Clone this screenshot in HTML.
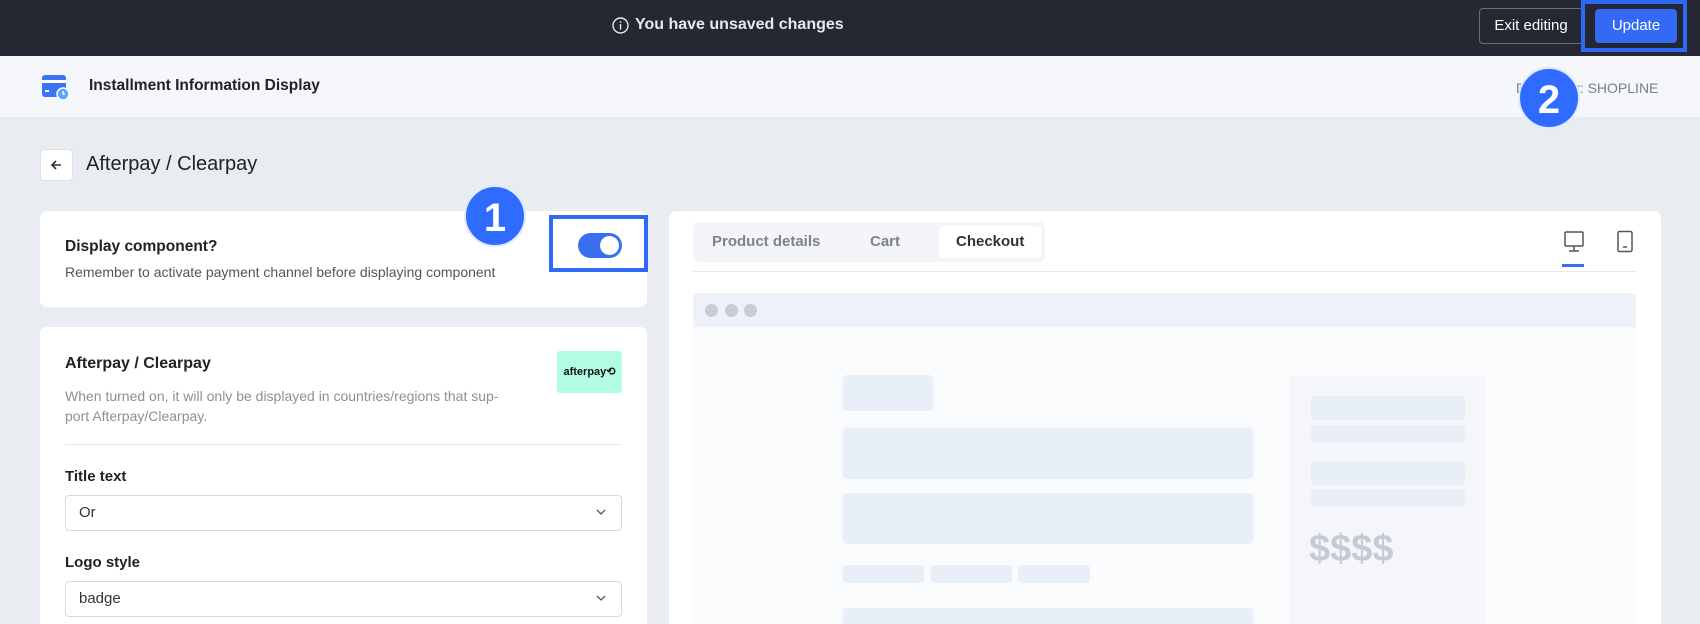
<!DOCTYPE html>
<html style="width:1700px;height:624px;overflow:hidden"><head><meta charset="utf-8"><style>
*{box-sizing:border-box;margin:0;padding:0}
body{width:1700px;height:624px;overflow:hidden;background:#e9ecf1;font-family:"Liberation Sans",sans-serif;position:relative;color:#1f2329}
.a{position:absolute}
.top{left:0;top:0;width:1700px;height:56px;background:#252733}
.hdr{left:0;top:56px;width:1700px;height:61px;background:#f5f7fa}
.card{background:#fff;border-radius:7px}
.sk{background:#e9eff6;border-radius:4px}
.hl{border:4px solid #2f68f5}
.circ{background:#2f6bff;border-radius:50%;color:#fff;font-weight:bold;font-size:40px;text-align:center;line-height:62px;width:62px;height:62px;border:2px solid #dfe8ff}
.sel{border:1px solid #d6d9df;border-radius:4px;background:#fff;font-size:15px;color:#333;padding-left:13px}
.lbl{font-size:15px;font-weight:bold;color:#222}
</style></head><body>
<div class="a top"></div>
<div class="a" style="left:612px;top:16px;color:#e8e9ec;font-size:16px;font-weight:bold;display:flex;align-items:center;gap:6px">
<svg width="17" height="17" viewBox="0 0 17 17"><circle cx="8.5" cy="8.5" r="7.5" fill="none" stroke="#e8e9ec" stroke-width="1.4"/><rect x="7.8" y="7" width="1.4" height="5.5" fill="#e8e9ec"/><rect x="7.8" y="4.3" width="1.4" height="1.5" fill="#e8e9ec"/></svg>You have unsaved changes</div>
<div class="a" style="left:1479px;top:8px;width:104px;height:36px;border:1px solid #6b6e78;border-radius:4px;color:#fff;font-size:15px;text-align:center;line-height:34px">Exit editing</div>
<div class="a hl" style="left:1581px;top:0;width:106px;height:52px"></div>
<div class="a" style="left:1595px;top:9px;width:82px;height:34px;background:#3369f5;border-radius:4px;color:#fff;font-size:15px;text-align:center;line-height:34px">Update</div>

<div class="a hdr"></div>
<svg class="a" style="left:41px;top:74px" width="29" height="27" viewBox="0 0 29 27"><rect x="1" y="1" width="24" height="22" rx="3" fill="#3a74f2"/><rect x="1" y="6" width="24" height="3" fill="#fff"/><rect x="4" y="16" width="4" height="2" fill="#fff"/><circle cx="22" cy="20" r="6" fill="#5aa8f5" stroke="#fff" stroke-width="1.5"/><path d="M22 17v3h2" stroke="#fff" stroke-width="1.3" fill="none"/></svg>
<div class="a" style="left:89px;top:77px;font-size:15.5px;font-weight:bold;color:#222">Installment Information Display</div>
<div class="a" style="left:1516px;top:80px;font-size:14px;color:#7a7f89">Developer: SHOPLINE</div>
<div class="a circ" style="left:1518px;top:67px">2</div>

<div class="a" style="left:40px;top:149px;width:33px;height:32px;background:#fff;border:1px solid #dde0e5;border-radius:4px"><svg width="31" height="30" viewBox="0 0 31 30"><path d="M20 15H11M15 11l-4 4 4 4" stroke="#333" stroke-width="1.6" fill="none"/></svg></div>
<div class="a" style="left:86px;top:153px;font-size:20px;color:#222">Afterpay / Clearpay</div>

<div class="a card" style="left:40px;top:211px;width:607px;height:96px"></div>
<div class="a lbl" style="left:65px;top:238px;font-size:15.5px">Display component?</div>
<div class="a" style="left:65px;top:264px;font-size:14px;color:#555">Remember to activate payment channel before displaying component</div>
<div class="a hl" style="left:549px;top:215px;width:99px;height:57px"></div>
<div class="a" style="left:578px;top:233px;width:44px;height:25px;background:#3a6ff0;border-radius:13px"><div class="a" style="left:22px;top:3px;width:19px;height:19px;background:#fff;border-radius:50%"></div></div>
<div class="a circ" style="left:464px;top:185px">1</div>

<div class="a card" style="left:40px;top:327px;width:607px;height:297px;border-radius:7px 7px 0 0"></div>
<div class="a lbl" style="left:65px;top:355px;font-size:16px">Afterpay / Clearpay</div>
<div class="a" style="left:65px;top:386px;font-size:14px;color:#8a8f99;line-height:20px;width:470px">When turned on, it will only be displayed in countries/regions that sup-<br>port Afterpay/Clearpay.</div>
<div class="a" style="left:557px;top:351px;width:65px;height:42px;background:#b2fce4;border-radius:3px;font-size:11px;font-weight:bold;text-align:center;line-height:42px;color:#111">afterpay⟲</div>
<div class="a" style="left:65px;top:444px;width:557px;height:1px;background:#e6e8ec"></div>
<div class="a lbl" style="left:65px;top:468px">Title text</div>
<div class="a sel" style="left:65px;top:495px;width:557px;height:36px;line-height:34px">Or</div>
<div class="a lbl" style="left:65px;top:554px">Logo style</div>
<div class="a sel" style="left:65px;top:581px;width:557px;height:36px;line-height:34px">badge</div>
<svg class="a" style="left:596px;top:508px" width="10" height="8"><path d="M1 2l4 4 4-4" stroke="#555" stroke-width="1.3" fill="none"/></svg>
<svg class="a" style="left:596px;top:594px" width="10" height="8"><path d="M1 2l4 4 4-4" stroke="#555" stroke-width="1.3" fill="none"/></svg>

<div class="a card" style="left:669px;top:211px;width:992px;height:413px;border-radius:7px 7px 0 0"></div>
<div class="a" style="left:693px;top:222px;width:352px;height:40px;background:#f3f5f8;border-radius:5px"></div>
<div class="a" style="left:939px;top:226px;width:103px;height:32px;background:#fff;border-radius:4px"></div>
<div class="a" style="left:712px;top:233px;font-size:15px;font-weight:bold;color:#7d828c">Product details</div>
<div class="a" style="left:870px;top:233px;font-size:15px;font-weight:bold;color:#7d828c">Cart</div>
<div class="a" style="left:956px;top:233px;font-size:15px;font-weight:bold;color:#333">Checkout</div>
<div class="a" style="left:693px;top:271px;width:943px;height:1px;background:#e8eaee"></div>
<svg class="a" style="left:1563px;top:230px" width="22" height="24" viewBox="0 0 22 24"><rect x="2" y="2" width="18" height="14" rx="1" fill="none" stroke="#555" stroke-width="1.5"/><path d="M11 16v5M6 21h10" stroke="#555" stroke-width="1.5"/></svg>
<div class="a" style="left:1562px;top:264px;width:22px;height:3px;background:#3a6ff0"></div>
<svg class="a" style="left:1616px;top:230px" width="18" height="24" viewBox="0 0 18 24"><rect x="2" y="1.5" width="14" height="20" rx="1.5" fill="none" stroke="#555" stroke-width="1.5"/><path d="M7 17h4" stroke="#555" stroke-width="1.5"/></svg>

<div class="a" style="left:693px;top:293px;width:943px;height:331px;background:#fafbfd"></div>
<div class="a" style="left:693px;top:293px;width:943px;height:34px;background:#eef2f8;border-radius:5px 5px 0 0"></div>
<div class="a" style="left:705px;top:304px;width:13px;height:13px;border-radius:50%;background:#c7ccd6"></div>
<div class="a" style="left:725px;top:304px;width:13px;height:13px;border-radius:50%;background:#c7ccd6"></div>
<div class="a" style="left:744px;top:304px;width:13px;height:13px;border-radius:50%;background:#c7ccd6"></div>
<div class="a sk" style="left:843px;top:375px;width:90px;height:36px"></div>
<div class="a sk" style="left:843px;top:428px;width:410px;height:51px"></div>
<div class="a sk" style="left:843px;top:493px;width:410px;height:51px"></div>
<div class="a sk" style="left:843px;top:565px;width:81px;height:18px"></div>
<div class="a sk" style="left:931px;top:565px;width:81px;height:18px"></div>
<div class="a sk" style="left:1018px;top:565px;width:72px;height:18px"></div>
<div class="a sk" style="left:843px;top:608px;width:410px;height:16px;border-radius:4px 4px 0 0"></div>
<div class="a" style="left:1289px;top:375px;width:196px;height:249px;background:#f4f6fa"></div>
<div class="a sk" style="left:1311px;top:396px;width:154px;height:24px"></div>
<div class="a sk" style="left:1311px;top:425px;width:154px;height:18px"></div>
<div class="a sk" style="left:1311px;top:461px;width:154px;height:24px"></div>
<div class="a sk" style="left:1311px;top:489px;width:154px;height:18px"></div>
<div class="a" style="left:1309px;top:528px;font-size:38px;font-weight:bold;color:#c5cbd6">$$$$</div>
</body></html>
